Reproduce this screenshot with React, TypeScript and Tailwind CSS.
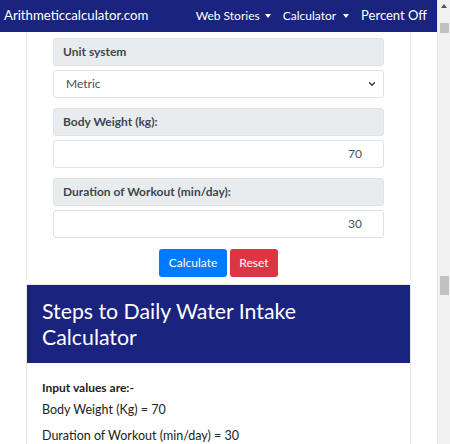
import { ChevronDown } from "lucide-react";

const labelClass =
  "flex h-[28px] items-center rounded-[3px] border border-[#dfe3e7] bg-[#e9ecef] px-[9px] text-[12px] font-bold text-[#3f464d]";

const fieldClass =
  "flex h-[28px] items-center rounded-[3px] border border-[#dee2e6] bg-white text-[12px] text-[#495057]";

function Field({ label, value }: { label: string; value: string }) {
  return (
    <div className="flex flex-col gap-[4px]">
      <div className={labelClass}>{label}</div>
      <div className={`${fieldClass} justify-end pr-[21px]`}>{value}</div>
    </div>
  );
}

function Scrollbar() {
  return (
    <div className="relative h-full w-[13px] border-l border-[#e8e8e8] bg-[#f1f1f1]">
      <div className="absolute left-[3px] top-[4px] h-0 w-0 border-x-[3.5px] border-b-[4px] border-x-transparent border-b-[#555]" />
      <div className="absolute left-[2px] top-[23px] h-[10px] w-[9px] bg-[#c1c1c1]" />
      <div className="absolute left-[2px] top-[276px] h-[19px] w-[9px] bg-[#c1c1c1]" />
    </div>
  );
}

export default function App() {
  return (
    <div className="flex h-[444px] w-[450px] overflow-hidden bg-white font-['Lato','Liberation_Sans',sans-serif]">
      <div className="flex w-[437px] flex-col">
        {/* navbar */}
        <nav className="flex h-[32px] shrink-0 items-center bg-[#1a237e] pl-[4px] pr-[10px] text-white">
          <span className="text-[13.2px]">Arithmeticcalculator.com</span>
          <div className="ml-auto flex items-center text-[12px]">
            <span>Web Stories</span>
            <span className="ml-[5px] mr-[12px] h-0 w-0 border-x-[3px] border-t-[4px] border-x-transparent border-t-white" />
            <span>Calculator</span>
            <span className="ml-[7px] mr-[12px] h-0 w-0 border-x-[3px] border-t-[4px] border-x-transparent border-t-white" />
            <span className="text-[13px]">Percent Off</span>
          </div>
        </nav>

        <div className="flex flex-col gap-[6px] px-[26px]">
          {/* form card */}
          <div className="flex flex-col gap-[10px] border-x border-[#ececec] bg-white px-[26px] pt-[6px] pb-[1px]">
            <div className="flex flex-col gap-[4px]">
              <div className={labelClass}>Unit system</div>
              <div className={`${fieldClass} justify-between pl-[12px] pr-[6px]`}>
                <span>Metric</span>
                <ChevronDown size={10} strokeWidth={3} className="text-[#333]" />
              </div>
            </div>
            <Field label="Body Weight (kg):" value="70" />
            <Field label="Duration of Workout (min/day):" value="30" />
            <div className="mt-[1px] flex justify-center gap-[3px]">
              <button className="h-[28px] w-[68px] rounded-[3px] bg-[#007bff] text-[12px] text-white">Calculate</button>
              <button className="h-[28px] w-[48px] rounded-[3px] bg-[#dc3545] text-[12px] text-white">Reset</button>
            </div>
          </div>

          {/* steps card */}
          <div className="border border-[#e6e6e6]">
            <div className="flex h-[78px] items-center bg-[#1a237e] px-[15px] text-[21.3px] leading-[1.24] text-white">
              Steps to Daily Water Intake
              <br />
              Calculator
            </div>
            <div className="flex flex-col px-[15px] pt-[16px] text-[#222]">
              <p className="text-[12px] leading-[18px] font-bold">Input values are:-</p>
              <p className="mt-[3px] text-[12.5px] leading-[19px]">Body Weight (Kg) = 70</p>
              <p className="mt-[7px] text-[12.5px] leading-[19px]">Duration of Workout (min/day) = 30</p>
            </div>
          </div>
        </div>
      </div>
      <Scrollbar />
    </div>
  );
}
